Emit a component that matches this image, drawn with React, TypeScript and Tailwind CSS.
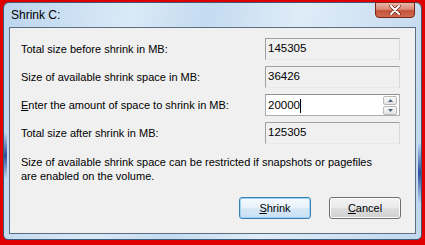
const rows = [
  { label: "Total size before shrink in MB:", value: "145305", editable: false },
  { label: "Size of available shrink space in MB:", value: "36426", editable: false },
  { label: "Enter the amount of space to shrink in MB:", value: "20000", editable: true },
  { label: "Total size after shrink in MB:", value: "125305", editable: false },
];

function Label({ text, editable }: { text: string; editable: boolean }) {
  if (!editable) return <span>{text}</span>;
  return (
    <span>
      <span className="underline">E</span>
      {text.slice(1)}
    </span>
  );
}

function Spinner() {
  return (
    <div className="absolute right-[2px] top-[1px] flex flex-col gap-[1px]">
      {["up", "down"].map((dir) => (
        <div
          key={dir}
          className="w-[14px] h-[9px] border border-[#b8b8b8] rounded-[2px] bg-[linear-gradient(#fafafa,#e4e4e4)] flex items-center justify-center"
        >
          <svg width="5" height="3" viewBox="0 0 5 3">
            {dir === "up" ? (
              <path d="M0 3 L2.5 0 L5 3 Z" fill="#4d6185" />
            ) : (
              <path d="M0 0 L2.5 3 L5 0 Z" fill="#4d6185" />
            )}
          </svg>
        </div>
      ))}
    </div>
  );
}

export default function App() {
  return (
    <div className="w-[425px] h-[245px] bg-[#e00000] pt-[2px] px-[3px] pb-[5px] font-['Liberation_Sans',Arial,sans-serif] text-[11px] text-black">
      <div className="relative h-full rounded-t-[6px] rounded-b-[5px] border border-[#3d5a78] bg-[linear-gradient(100deg,#bcd5ee_0%,#dae9f7_28%,#c4dbf0_45%,#dfecf8_65%,#c0d7ee_100%)] px-[5px] pb-[5px] flex flex-col">
        {/* title bar */}
        <div className="h-[24px] flex items-center pl-[2px] text-[12px] text-black">Shrink C:</div>
        <div className="absolute right-[6px] top-[-1px] w-[40px] h-[16px] rounded-b-[4px] border border-[#7a2416] bg-[linear-gradient(#e9b6aa_0%,#d98a76_45%,#c4523a_55%,#d26a52_100%)] flex items-center justify-center">
          <svg width="12" height="10" viewBox="0 0 12 10">
            <path d="M2 1 L10 9 M10 1 L2 9" stroke="#6b2418" strokeWidth="3.4" strokeLinecap="round" />
            <path d="M2 1 L10 9 M10 1 L2 9" stroke="#ffffff" strokeWidth="2" strokeLinecap="round" />
          </svg>
        </div>

        {/* left and right glass streaks */}
        <div className="absolute left-[0px] top-[130px] w-[3px] h-[45px] bg-[linear-gradient(#bcd5ee,#2d4f9a,#bcd5ee)]" />
        <div className="absolute right-[0px] top-[140px] w-[3px] h-[60px] bg-[linear-gradient(#bcd5ee,#2d4f9a,#bcd5ee)]" />

        {/* client area */}
        <div className="flex-1 border border-[#5b6e82] bg-[#f0f0f0] pt-[10px] pl-[11px] pr-[14px] flex flex-col">
          <div className="flex flex-col gap-[6px]">
            {rows.map((row) => (
              <div key={row.label} className="flex items-center h-[22px]">
                <div className="w-[244px]">
                  <Label text={row.label} editable={row.editable} />
                </div>
                {row.editable ? (
                  <div className="relative w-[135px] h-[22px] border border-[#abadb3] border-t-[#8b8f98] bg-white pl-[2px] pt-[2px] text-[11.5px]">
                    <span>
                      {row.value}
                      <span className="inline-block w-[1px] h-[14px] bg-black align-middle" />
                    </span>
                    <Spinner />
                  </div>
                ) : (
                  <div className="w-[135px] h-[22px] border-l border-t border-[#a0a0a0] border-r border-r-[#d8d8d8] border-b border-b-[#e8e8e8] bg-[#f0f0f0] pl-[2px] pt-[1px] leading-[16px] text-[11.5px]">
                    {row.value}
                  </div>
                )}
              </div>
            ))}
          </div>

          <p className="mt-[11px] leading-[14px]">
            Size of available shrink space can be restricted if snapshots or pagefiles
            <br />
            are enabled on the volume.
          </p>

          <div className="mt-auto mb-[14px] flex justify-end gap-[18px]">
            <button className="w-[72px] h-[22px] rounded-[3px] border border-[#3c7fb1] bg-[linear-gradient(#f4f9fd_0%,#eaf3fb_45%,#d5e7f6_55%,#c9e0f4_100%)] shadow-[inset_0_0_0_1px_#9ad4f5]">
              <span className="underline">S</span>hrink
            </button>
            <button className="w-[72px] h-[22px] rounded-[3px] border border-[#707070] bg-[linear-gradient(#f2f2f2_0%,#ebebeb_45%,#dddddd_55%,#cfcfcf_100%)] shadow-[inset_0_0_0_1px_#fcfcfc]">
              <span className="underline">C</span>ancel
            </button>
          </div>
        </div>
      </div>
    </div>
  );
}
